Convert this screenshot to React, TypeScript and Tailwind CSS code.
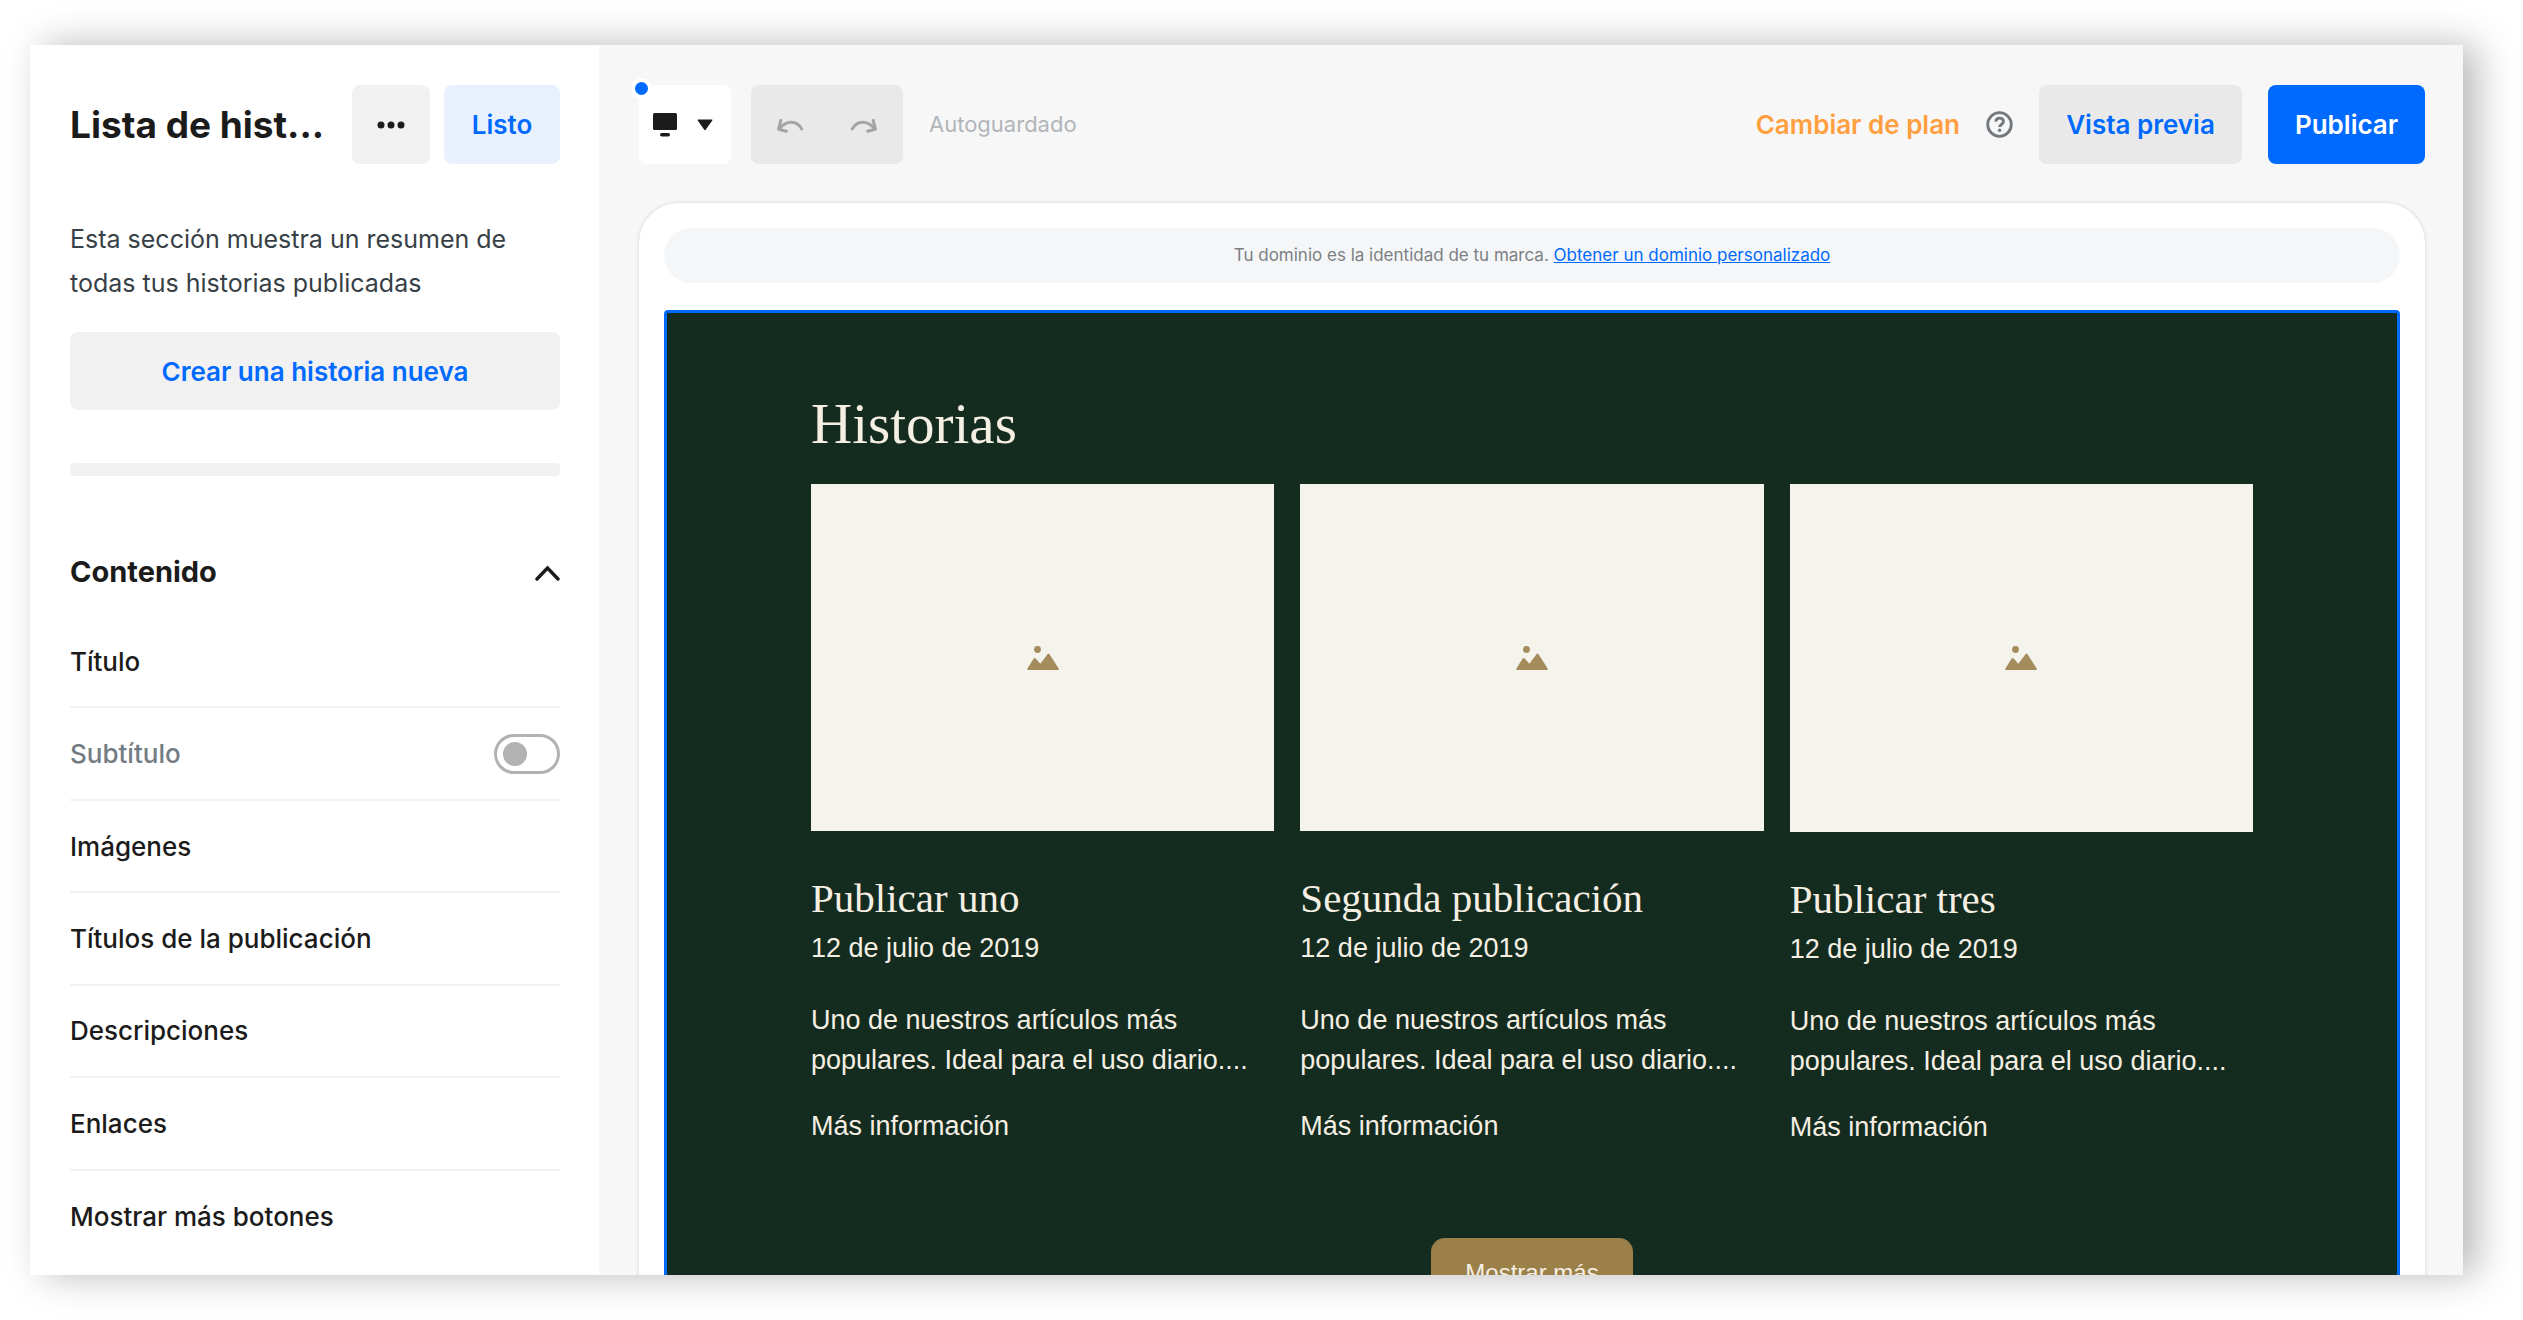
import { useState } from "react";

type ContentRow = { id: string; label: string; hidden?: boolean };

const ROWS: ContentRow[] = [
  { id: "title", label: "Título" },
  { id: "subtitle", label: "Subtítulo", hidden: true },
  { id: "images", label: "Imágenes" },
  { id: "post-titles", label: "Títulos de la publicación" },
  { id: "descriptions", label: "Descripciones" },
  { id: "links", label: "Enlaces" },
  { id: "more-buttons", label: "Mostrar más botones" },
];

const POSTS = ["Publicar uno", "Segunda publicación", "Publicar tres"];

function DotsIcon() {
  return (
    <svg width="28" height="8" viewBox="0 0 28 8" fill="currentColor" aria-hidden="true">
      <circle cx="4" cy="4" r="3.5" />
      <circle cx="14" cy="4" r="3.5" />
      <circle cx="24" cy="4" r="3.5" />
    </svg>
  );
}

function ChevronUpIcon() {
  return (
    <svg width="26" height="20" viewBox="0 0 26 20" fill="none" aria-hidden="true">
      <path
        d="M3 17 13.500 6 24 17"
        stroke="currentColor"
        strokeWidth="3.4"
        strokeLinecap="round"
      />
    </svg>
  );
}

function DesktopIcon() {
  return (
    <svg width="24" height="24" viewBox="0 0 24 24" fill="currentColor" aria-hidden="true">
      <rect x="0" y="0" width="24" height="17" rx="1.5" />
      <rect x="7" y="20" width="10" height="3.6" rx="1.8" />
    </svg>
  );
}

function CaretIcon() {
  return (
    <svg width="16" height="12" viewBox="0 0 16 12" fill="currentColor" aria-hidden="true">
      <path d="M1.2.5h13.6a.6.6 0 0 1 .5 1L8.7 10.8a.9.9 0 0 1-1.4 0L.7 1.5a.6.6 0 0 1 .5-1Z" />
    </svg>
  );
}

function CurvedArrow({ flip }: { flip?: boolean }) {
  return (
    <svg
      width="28"
      height="16"
      viewBox="0 0 28 16"
      fill="none"
      stroke="currentColor"
      strokeWidth="3"
      strokeLinecap="round"
      strokeLinejoin="round"
      className={flip ? "-scale-x-100" : ""}
      aria-hidden="true"
    >
      <path d="M4.800 3.400 2.600 12.200l7.800 2" />
      <path d="M3.400 11.800C10.500 3.200 20.500 3 25.800 12" />
    </svg>
  );
}

function HelpIcon() {
  return (
    <svg width="27" height="27" viewBox="0 0 27 27" fill="none" aria-hidden="true">
      <circle cx="13.5" cy="13.5" r="11.8" stroke="currentColor" strokeWidth="2.8" />
      <path
        d="M9.8 10.6c.1-2.1 1.6-3.5 3.8-3.5s3.8 1.3 3.8 3.300c0 1.500-.8 2.400-2 3.100-1.200.8-1.700 1.200-1.700 2.600"
        stroke="currentColor"
        strokeWidth="2.9"
      />
      <circle cx="13.6" cy="19.3" r="1.7" fill="currentColor" />
    </svg>
  );
}

function PictureIcon() {
  return (
    <svg width="32" height="24" viewBox="0 0 32 24" fill="currentColor" aria-hidden="true">
      <circle cx="10.5" cy="3.5" r="3.4" />
      <path d="M.4 22.6 6.7 12.6q1-1.4 2 0l4.6 5.2 7.2-9.6q1-1.3 2 0l9.2 14.4q.5 1.4-.9 1.4H1.2q-1.4 0-.8-1.4Z" />
    </svg>
  );
}

function Sidebar() {
  const [subtitle, setSubtitle] = useState(false);

  return (
    <aside className="w-[569px] shrink-0 bg-white pt-10 pr-[39px] pl-10">
      <header className="flex items-center justify-between">
        <h1 className="text-[37px] leading-[48px] font-bold text-[#1b1b1b]">Lista de hist...</h1>
        <div className="flex gap-[14px]">
          <button
            aria-label="Más opciones"
            className="flex h-[79px] w-[78px] items-center justify-center rounded-lg bg-[#f1f1f1] text-[#1b1b1b]"
          >
            <DotsIcon />
          </button>
          <button className="h-[79px] w-[116px] rounded-lg bg-[#e9f1ff] text-[26px] font-semibold text-[#006aff]">
            Listo
          </button>
        </div>
      </header>

      <p className="mt-[53px] text-[25px] leading-[44px] text-[#373f47]">
        Esta sección muestra un resumen de todas tus historias publicadas
      </p>
      <button className="mt-[27px] h-[78px] w-full rounded-lg bg-[#f1f1f1] text-[26px] font-semibold text-[#006aff]">
        Crear una historia nueva
      </button>
      <div className="mt-[53px] h-[13px] rounded-sm bg-[#f1f1f1]" />

      <button className="mt-[74px] mb-[22px] flex w-full items-center justify-between text-left text-[29px] leading-[44px] font-bold text-[#1b1b1b]">
        Contenido
        <ChevronUpIcon />
      </button>

      <ul className="grid h-[647px] auto-rows-fr">
        {ROWS.map((row) => (
          <li
            key={row.id}
            className="flex items-center justify-between border-b-2 border-[#f2f2f2] text-[26px] font-medium text-[#1b1b1b] last:border-b-0"
          >
            {row.hidden ? (
              <>
                <label htmlFor={row.id} className="text-[#737b83]">
                  {row.label}
                </label>
                <input
                  id={row.id}
                  type="checkbox"
                  checked={subtitle}
                  onChange={(e) => setSubtitle(e.target.checked)}
                  className="flex h-10 w-[66px] appearance-none items-center rounded-full border-[3px] border-[#b2b2b2] px-1.5 before:size-6 before:rounded-full before:bg-[#b2b2b2] checked:justify-end checked:border-[#006aff] checked:before:bg-[#006aff]"
                />
              </>
            ) : (
              row.label
            )}
          </li>
        ))}
      </ul>
    </aside>
  );
}

function Toolbar() {
  return (
    <div className="flex items-center justify-between">
      <div className="flex items-center">
        <button
          aria-label="Vista de escritorio"
          className="relative flex h-[79px] w-[92px] items-center gap-5 rounded-lg bg-white px-3.5 text-[#1b1b1b]"
        >
          <DesktopIcon />
          <CaretIcon />
          <span className="absolute -top-[7px] -left-2 size-[21px] rounded-full border-4 border-white bg-[#006aff]" />
        </button>
        <div className="ml-5 flex h-[79px] w-[152px] items-center justify-between rounded-lg bg-[#e9e9e9] px-[25px] text-[#a4a4a4]">
          <button aria-label="Deshacer">
            <CurvedArrow />
          </button>
          <button aria-label="Rehacer">
            <CurvedArrow flip />
          </button>
        </div>
        <span className="ml-[26px] text-[22px] text-[#b1b5b9]">Autoguardado</span>
      </div>

      <div className="flex items-center gap-[26px] text-[26px] font-semibold">
        <a href="#plan" className="text-[#ff9f40]">
          Cambiar de plan
        </a>
        <button aria-label="Ayuda" className="text-[#73787d]">
          <HelpIcon />
        </button>
        <button className="h-[79px] w-[203px] rounded-lg bg-[#e9e9e9] text-[#006aff]">
          Vista previa
        </button>
        <button className="h-[79px] w-[157px] rounded-lg bg-[#006aff] text-white">Publicar</button>
      </div>
    </div>
  );
}

function Post({ title }: { title: string }) {
  return (
    <article className="text-[27px] leading-[40px]">
      <div className="flex aspect-[4/3] items-center justify-center bg-[#f4f3ec] text-[#a48c5c]">
        <PictureIcon />
      </div>
      <h3 className="mt-[39px] font-['Liberation_Serif',serif] text-[41px] leading-[56px]">
        {title}
      </h3>
      <p className="mt-0.5">12 de julio de 2019</p>
      <p className="mt-8">
        Uno de nuestros artículos más
        <br />
        populares. Ideal para el uso diario....
      </p>
      <a href="#post" className="mt-[26px] block">
        Más información
      </a>
    </article>
  );
}

function Preview() {
  return (
    <div className="mt-[39px] rounded-t-[40px] bg-white px-[25px] pt-[25px] shadow-[0_0_4px_rgba(0,0,0,0.14)]">
      <p className="flex h-[55px] items-center justify-center rounded-full bg-[#f4f6f8] text-[17px] text-[#7c8084]">
        <span>
          Tu dominio es la identidad de tu marca.{" "}
          <a href="#dominio" className="text-[#006aff] underline">
            Obtener un dominio personalizado
          </a>
        </span>
      </p>
      <section className="mt-[27px] rounded-t border-[3px] border-[#006aff] bg-[#142b1f] px-36 pt-[75px] pb-24 font-['Liberation_Sans',sans-serif] text-[#f5efe3]">
        <h2 className="mb-6 font-['Liberation_Serif',serif] text-[57px] leading-[72px]">
          Historias
        </h2>
        <div className="grid grid-cols-3 gap-[26px]">
          {POSTS.map((title) => (
            <Post key={title} title={title} />
          ))}
        </div>
        <div className="mt-[91px] flex justify-center">
          <button className="h-[70px] w-[202px] rounded-[14px] bg-[#9b8049] text-[24px]">
            Mostrar más
          </button>
        </div>
      </section>
    </div>
  );
}

export default function App() {
  return (
    <div className="h-screen overflow-hidden bg-white py-[45px] pr-[60px] pl-[30px] font-['Inter',sans-serif]">
      <div className="h-full shadow-[14px_0_36px_rgba(0,0,0,0.28)]">
        <div className="flex h-full overflow-hidden bg-[#f7f7f7]">
          <Sidebar />
          <main className="min-w-0 flex-1 pt-10 pr-[38px] pl-10">
            <Toolbar />
            <Preview />
          </main>
        </div>
      </div>
    </div>
  );
}
